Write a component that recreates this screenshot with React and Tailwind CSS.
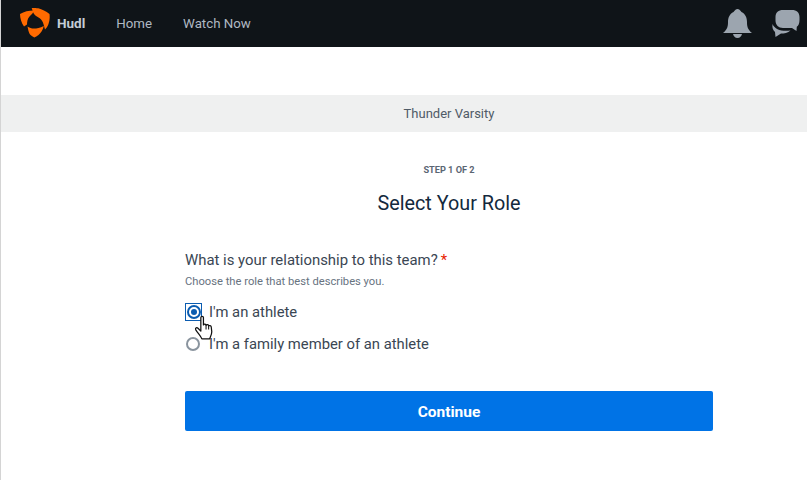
export default function App() {
  return (
    <div className="h-[480px] w-[807px] overflow-hidden bg-white font-['Roboto',sans-serif] border-l border-[#d4d4d4]">
      <header className="flex h-[47px] items-center bg-[#0f1418]">
        <svg width="30" height="30" viewBox="0 0 30 30" className="ml-[19px] mt-[-1px]">
          <path fill="#ff6a00" d="M0 6 C4 3.500 9 2.500 13.500 2.500 C13.500 5 11.500 6.500 9.500 8.500 C7.500 10.500 7 14 7 16.500 L4 18.500 C1.500 15 0 10 0 6Z" />
          <path fill="#ff6a00" d="M11.700 0 C14 -0.200 16 0 18.300 0.300 C22 1.500 26 3 29.500 6 C30 10 29.500 13 28.500 16 C27.800 18 26.500 20 25 21.500 C24 18 23.500 15 22 12.700 C20.500 10.500 19 9.500 17.300 8.700 C15 7.500 13.500 5.500 13 4 Z" />
          <path fill="#ff6a00" d="M7.500 18.500 C10 20 11.500 20.500 13.500 20.500 C17 20.500 20 20 23.800 18 C23 22 20.800 25 18.500 26.900 C17 28 15.500 28.800 14.300 29.500 C12 28.500 10 27 9.300 25.300 C8.500 23.500 8 21 7.500 18.500Z" />
        </svg>
        <span className="ml-[7px] text-[13.5px] font-bold text-[#c4cdd6]">Hudl</span>
        <span className="ml-[31px] text-[13.300px] text-[#b0b9c3]">Home</span>
        <span className="ml-[31px] text-[13.300px] text-[#b0b9c3]">Watch Now</span>
        <div className="ml-auto mr-[7px] flex items-center gap-[20px]">
          <svg width="29" height="30" viewBox="0 0 29 30" className="mt-[1px]">
            <path fill="#9ca5af" d="M14.500 0 C16 0 17 1 18.500 3 C22.500 5 24 9 24 13 C24 17 24.500 20.500 29 24 L0 24 C4.500 20.500 5 17 5 13 C5 9 6.500 5 10.500 3 C12 1 13 0 14.500 0Z" />
            <path fill="#9ca5af" d="M10 25 L19 25 C18.500 27 17 29 14.500 29 C12 29 10.500 27 10 25Z" />
          </svg>
          <svg width="28" height="28" viewBox="0 0 28 28">
            <path fill="#9ca5af" d="M11 0 L20 0 C24.500 0 27.500 2.500 27.500 7 L27.500 10 C27.500 13.500 26.500 15.500 24.800 16.800 L24.500 21 L20 18 L11 18 C6.500 18 3.500 15 3.500 10.500 L3.500 7 C3.500 2.500 6.500 0 11 0Z" />
            <path fill="#9ca5af" d="M0.500 14 C0 18 1 20 3 22 L3.500 27 L9 23.500 C12 23.500 16 23 18.500 20.500 C10 21.500 3 20 0.500 14Z" />
          </svg>
        </div>
      </header>
      <div className="mt-[48px] flex h-[37px] items-center justify-center bg-[#eff0f0] pl-[90px] text-[13px] text-[#4f5b67]">
        Thunder Varsity
      </div>
      <main className="ml-[184px] flex w-[528px] flex-col">
        <div className="mt-[32px] text-center text-[9.200px] font-bold leading-[12px] text-[#5b6673]">STEP 1 OF 2</div>
        <h1 className="mt-[15px] text-center text-[19.800px] leading-[26px] text-[#13293d]">Select Your Role</h1>
        <div className="mt-[33px] flex items-center text-[14.900px] leading-[20px] text-[#3a4653]">
          What is your relationship to this team?<span className="ml-[3px] text-[#e81c00]">*</span>
        </div>
        <div className="mt-[5px] text-[11.200px] leading-[14px] text-[#68737f]">Choose the role that best describes you.</div>
        <div className="mt-[13px] flex h-[20px] items-center text-[14.800px] text-[#3a4653]">
          <div className="relative flex h-[18px] w-[17px] shrink-0 items-center justify-center border border-[#0b5cb0]">
            <div className="flex h-[14px] w-[14px] items-center justify-center rounded-full border-2 border-[#0b5cb0]">
              <div className="h-[6px] w-[6px] rounded-full bg-[#0b5cb0]" />
            </div>
            <svg width="22" height="26" viewBox="0 0 20 25" className="absolute left-[8px] top-[11px]">
              <path fill="#fff" stroke="#111" strokeWidth="1.200" strokeLinejoin="round" d="M6 2.500 C6 0.800 8.500 0.800 8.500 2.500 L8.500 9.500 C9 8.500 11 8.500 11 10 C11.500 9 13.500 9 13.500 10.500 C14 10 16 10 16 11.500 L16.500 16 C16.500 19 15 21 14.500 23 L7 23 C6 20 3.500 18 1 14 C0.500 12.500 2 11.500 3.500 13 L6 15.500Z" />
              <path fill="none" stroke="#111" strokeWidth="1" d="M11 10 L11 14 M13.500 10.500 L13.500 14" />
            </svg>
          </div>
          <span className="ml-[7px]">I'm an athlete</span>
        </div>
        <div className="mt-[12px] flex h-[20px] items-center text-[14.800px] text-[#3a4653]">
          <div className="ml-[1px] h-[14px] w-[14px] shrink-0 rounded-full border-2 border-[#8a949e]" />
          <span className="ml-[9px]">I'm a family member of an athlete</span>
        </div>
        <button className="mt-[37px] h-[40px] w-full rounded-[2px] bg-[#0073e6] pt-[3px] text-[15.500px] font-bold text-white">Continue</button>
      </main>
    </div>
  );
}
